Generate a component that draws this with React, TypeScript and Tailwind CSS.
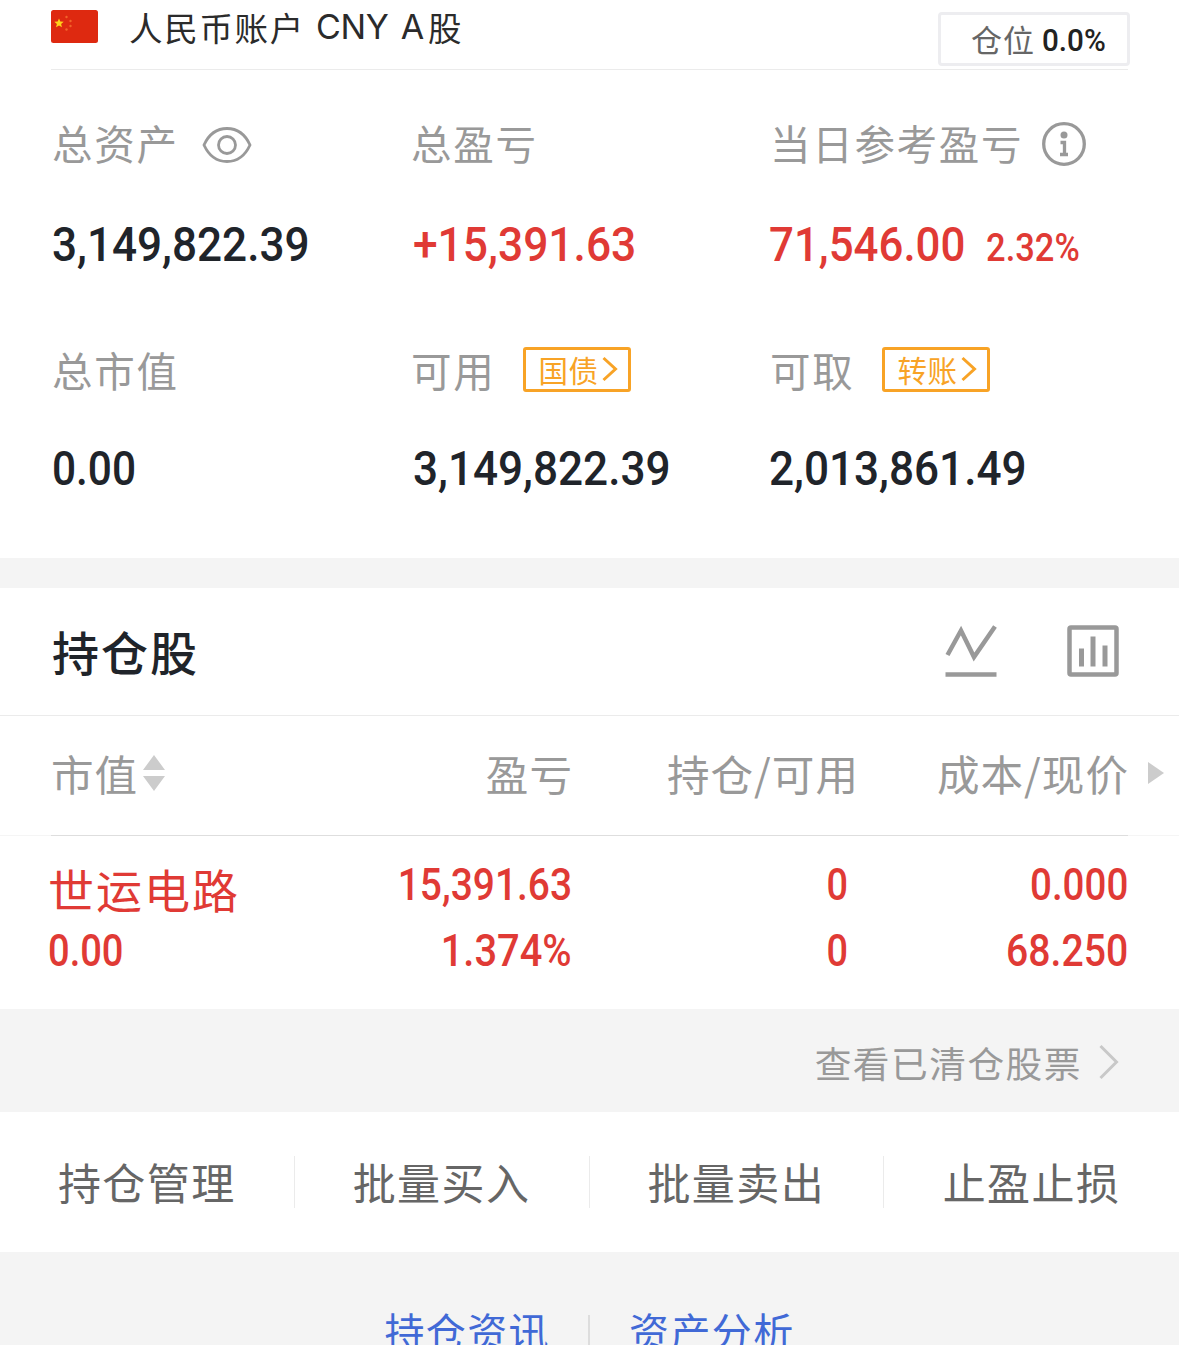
import React from 'react'

const actions = ['持仓管理', '批量买入', '批量卖出', '止盈止损']

function Num({ children, className = '' }: { children: React.ReactNode; className?: string }) {
  return (
    <span className={`inline-block whitespace-nowrap font-['Roboto',sans-serif] font-medium ${className}`}>
      {children}
    </span>
  )
}

function TagButton({ text }: { text: string }) {
  return (
    <button type="button" className="mb-[2px] ml-[28px] flex h-[45px] w-[108px] items-center rounded-[3px] border-[3px] border-[#f8a326] pl-[12px] text-[29.5px] leading-[38px] tracking-[0.5px] text-[#f8a326]">
      <span>{text}</span>
      <svg className="ml-[4px] shrink-0" width="16" height="28" viewBox="0 0 16 28" fill="none" stroke="currentColor" strokeWidth="3">
        <path d="M1.5 3L13.5 14L1.5 25" />
      </svg>
    </button>
  )
}

function Flag() {
  return (
    <svg width="47" height="33" viewBox="0 0 47 33">
      <rect width="47" height="33" rx="2.5" fill="#de2910" />
      <path d="M8 8.500l1.300 3.100 3.400.2-2.600 2.100.9 3.300L8 15.400l-3 1.800.9-3.300L3.300 11.800l3.400-.2z" fill="#ffd21a" />
      <g fill="#f2642a">
        <circle cx="15.500" cy="7" r="1.200" />
        <circle cx="19.500" cy="11" r="1.200" />
        <circle cx="19.500" cy="16" r="1.200" />
        <circle cx="15.500" cy="19.500" r="1.200" />
      </g>
    </svg>
  )
}

function AccountHeader() {
  return (
    <header className="mx-[51px] flex h-[70px] items-start border-b border-[#ebebeb]">
      <div className="pt-[10px]">
        <Flag />
      </div>
      <h1 className="ml-[31px] flex text-[33.5px] leading-[54px] tracking-[1.7px] text-[#2b2b2b]">
        <span>人民币账户</span>
        <span className="ml-[11px] font-['Inter',sans-serif] text-[34px] tracking-[-0.3px]">CNY</span>
        <span className="ml-[12px] font-['Inter',sans-serif] text-[34px] tracking-normal">A</span>
        <span className="ml-[4px]">股</span>
      </h1>
      <div className="-mr-[2px] ml-auto mt-[12px] flex h-[54px] w-[192px] shrink-0 items-center rounded-[4px] border-[3px] border-[#ededf0] pl-[30px]">
        <span className="text-[31px] leading-[48px] tracking-[1px] text-[#666]">仓位</span>
        <Num className="ml-[7px] origin-left scale-x-[0.94] pt-[3px] text-[31.5px] leading-[48px] text-[#222]">0.0%</Num>
      </div>
    </header>
  )
}

function Stat({ label, extra, children }: { label: string; extra?: React.ReactNode; children: React.ReactNode }) {
  return (
    <div className="flex h-full flex-col justify-between">
      <div className="flex h-[60px] items-center">
        <span className="whitespace-nowrap text-[40.5px] leading-[60px] tracking-[1.7px] text-[#999]">{label}</span>
        {extra}
      </div>
      <div className="text-[49px] leading-[60px] text-[#20242a]">{children}</div>
    </div>
  )
}

function EyeIcon() {
  return (
    <svg className="ml-[23px] mt-[3px]" width="50" height="38" viewBox="0 0 50 38" fill="none" stroke="#999" strokeWidth="2.8">
      <path d="M2 19C7 8 15 2.500 25 2.500S43 8 48 19C43 30 35 35.500 25 35.500S7 30 2 19Z" />
      <circle cx="25" cy="19" r="8.500" />
    </svg>
  )
}

function InfoIcon() {
  return (
    <svg className="ml-[18px] mt-[2px]" width="46" height="46" viewBox="0 0 46 46" fill="none" stroke="#999" strokeWidth="3.300">
      <circle cx="23" cy="23" r="20.300" />
      <circle cx="23" cy="14" r="3.500" fill="#999" stroke="none" />
      <path d="M19.500 21.500h4v12M19 33.500h8" />
    </svg>
  )
}

function Summary() {
  return (
    <section className="grid h-[488px] grid-cols-[359px_359px_1fr] grid-rows-[162px_159px] gap-y-[65px] pl-[52px] pt-[43px]">
      <Stat label="总资产" extra={<EyeIcon />}>
        <Num className="origin-left scale-x-[0.9]">3,149,822.39</Num>
      </Stat>
      <Stat label="总盈亏">
        <Num className="ml-[2px] origin-left scale-x-[0.905] text-[#e03a35]">+15,391.63</Num>
      </Stat>
      <Stat label="当日参考盈亏" extra={<InfoIcon />}>
        <Num className="-ml-px origin-left scale-x-[0.895] text-[#e03a35]">
          71,546.00<span className="ml-[23px] text-[38.5px] leading-none">2.32%</span>
        </Num>
      </Stat>
      <Stat label="总市值">
        <Num className="origin-left scale-x-[0.865]">0.00</Num>
      </Stat>
      <Stat label="可用" extra={<TagButton text="国债" />}>
        <Num className="ml-[2px] origin-left scale-x-[0.9]">3,149,822.39</Num>
      </Stat>
      <Stat label="可取" extra={<TagButton text="转账" />}>
        <Num className="-ml-px origin-left scale-x-[0.9]">2,013,861.49</Num>
      </Stat>
    </section>
  )
}

function Holdings() {
  return (
    <section className="bg-white">
      <div className="flex h-[128px] items-center border-b border-[#ebebeb] pb-[2px] pl-[52px] pr-[59px]">
        <h2 className="text-[47px] font-medium leading-[60px] tracking-[2px] text-[#20242a]">持仓股</h2>
        <svg className="ml-auto" width="54" height="54" viewBox="0 0 54 54" fill="none" stroke="#999" strokeWidth="4.500">
          <path d="M3.500 31L17 6.500L30 33L51 2.500M1.500 50.500H52.500" />
        </svg>
        <svg className="ml-[68px]" width="54" height="54" viewBox="0 0 54 54" fill="none" stroke="#999">
          <rect x="3.500" y="3.500" width="47" height="47" rx="1.500" strokeWidth="4.500" />
          <path d="M15.500 24.500v18M27 12.500v30M39 21.500v21" strokeWidth="5" />
        </svg>
      </div>

      <div className="flex h-[120px] flex-col">
        <div className="grid flex-1 grid-cols-[200px_322px_286px_270px_1fr] items-center pb-[6px] pl-[51px] text-[42.6px] leading-[60px] tracking-[1px] text-[#999]">
          <div className="flex items-center">
            市值
            <svg className="ml-[5px]" width="22" height="36" viewBox="0 0 22 36" fill="#ccc">
              <path d="M11 0L22 15H0zM11 36L22 21H0z" />
            </svg>
          </div>
          <div className="text-right">盈亏</div>
          <div className="text-right">持仓/可用</div>
          <div className="text-right">成本/现价</div>
          <svg className="ml-[19px]" width="16" height="22" viewBox="0 0 16 22" fill="#ccc">
            <path d="M0 0L16 11L0 22z" />
          </svg>
        </div>
        <div className="h-px bg-[#f5f5f5] px-[51px]">
          <div className="h-px bg-[#dedede]" />
        </div>
      </div>

      <div className="grid h-[173px] grid-cols-[200px_324px_276px_280px] grid-rows-[66px_66px] pl-[48px] pt-[12px] text-[44px] leading-[66px] text-[#e03a35]">
        <div className="whitespace-nowrap pt-[7px] text-[46px] tracking-[2px]">世运电路</div>
        <div className="text-right"><Num className="origin-right scale-x-[0.885]">15,391.63</Num></div>
        <div className="text-right"><Num className="origin-right scale-x-[0.86]">0</Num></div>
        <div className="text-right"><Num className="origin-right scale-x-[0.875]">0.000</Num></div>
        <div><Num className="origin-left scale-x-[0.865]">0.00</Num></div>
        <div className="text-right"><Num className="origin-right scale-x-[0.905]">1.374%</Num></div>
        <div className="text-right"><Num className="origin-right scale-x-[0.86]">0</Num></div>
        <div className="text-right"><Num className="origin-right scale-x-[0.89]">68.250</Num></div>
      </div>
    </section>
  )
}

export default function App() {
  return (
    <main lang="zh-CN" className="h-[1345px] w-[1179px] overflow-hidden bg-white font-['Noto_Sans_CJK_SC',sans-serif]">
      <AccountHeader />
      <Summary />
      <div className="h-[30px] bg-[#f4f4f4]" />
      <Holdings />

      <div className="flex h-[103px] items-center justify-end bg-[#f4f4f4] pr-[60px] pt-[2px]">
        <span className="text-[36.7px] leading-[60px] tracking-[1.5px] text-[#999]">查看已清仓股票</span>
        <svg className="ml-[17px]" width="20" height="36" viewBox="0 0 20 36" fill="none" stroke="#c8c8c8" strokeWidth="3">
          <path d="M1.500 2L17.500 18L1.500 34" />
        </svg>
      </div>

      <nav className="grid h-[140px] grid-cols-4 items-center">
        {actions.map((name, i) => (
          <div
            key={name}
            className={`flex h-[52px] items-center justify-center pb-[2px] text-[43px] tracking-[1.5px] text-[#666] ${i < actions.length - 1 ? 'border-r border-[#ebebeb]' : ''}`}
          >
            {name}
          </div>
        ))}
      </nav>

      <footer className="flex h-[93px] items-start justify-center bg-[#f4f4f4] pt-[50px] text-[40px] leading-[56px] tracking-[1.4px] text-[#4169d6]">
        <span>持仓资讯</span>
        <span className="ml-[38px] mr-[39px] mt-[13px] h-[40px] w-[2px] bg-[#ddd]" />
        <span>资产分析</span>
      </footer>
    </main>
  )
}
